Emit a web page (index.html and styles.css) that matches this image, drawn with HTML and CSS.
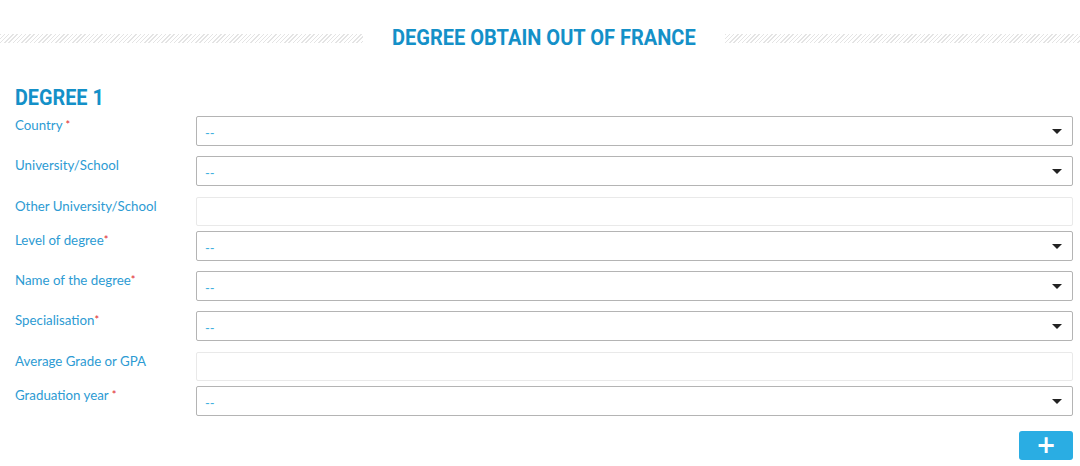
FILE: index.html
```html
<!DOCTYPE html>
<html>
	<head>
		<meta charset="UTF-8">
		<title>Degree obtain out of France</title>
		<link rel="stylesheet" href="styles.css">
	</head>
	<body>
		<div class="page">
			<div class="head">
				<span class="stripes"></span>
				<h2 class="title">DEGREE OBTAIN OUT OF FRANCE</h2>
				<span class="stripes stripes-r"></span>
			</div>

			<h3 class="sub">DEGREE 1</h3>

			<div class="form">
				<div class="row">
					<label class="lbl">Country <i class="req">*</i></label>
					<div class="select"><span>--</span><b class="arrow"></b></div>
				</div>
				<div class="row">
					<label class="lbl">University/School</label>
					<div class="select"><span>--</span><b class="arrow"></b></div>
				</div>
				<div class="row row-input">
					<label class="lbl">Other University/School</label>
					<div class="input"></div>
				</div>
				<div class="row">
					<label class="lbl">Level of degree<i class="req">*</i></label>
					<div class="select"><span>--</span><b class="arrow"></b></div>
				</div>
				<div class="row">
					<label class="lbl">Name of the degree<i class="req">*</i></label>
					<div class="select"><span>--</span><b class="arrow"></b></div>
				</div>
				<div class="row">
					<label class="lbl">Specialisation<i class="req">*</i></label>
					<div class="select"><span>--</span><b class="arrow"></b></div>
				</div>
				<div class="row row-input">
					<label class="lbl">Average Grade or GPA</label>
					<div class="input"></div>
				</div>
				<div class="row">
					<label class="lbl">Graduation year <i class="req">*</i></label>
					<div class="select"><span>--</span><b class="arrow"></b></div>
				</div>
			</div>

			<div class="actions">
				<button class="add">+</button>
			</div>
		</div>
	</body>
</html>
```

FILE: styles.css
```css
*{
	padding: 0px;
	margin: 0px;
	box-sizing: border-box;
}
body {
	background: #fff;
	font-family: "Lato", "Liberation Sans", sans-serif;
}
.page {
	padding: 25px 7px 0 15px;
}

/* titre avec les bandes hachurées */
.head {
	display: flex;
	align-items: center;
	gap: 14px;
	margin-left: -15px;
	margin-right: -7px;
}
.stripes {
	flex: 1;
	height: 9px;
	background: repeating-linear-gradient(135deg, #e4e4e4 0px, #e4e4e4 1px, #fff 1px, #fff 3px);
}
.stripes-r {
	flex: 0.98;
}
.title {
	font: 700 22px/26px "Roboto", sans-serif;
	color: #1490c8;
	white-space: nowrap;
	transform: scaleX(0.91);
}
.sub {
	font: 700 22px/26px "Roboto", sans-serif;
	color: #1490c8;
	margin-top: 34px;
	margin-bottom: 5px;
	display: inline-block;
	transform: scaleX(0.9);
	transform-origin: left center;
}

.row {
	display: flex;
	margin-bottom: 10px;
}
/* les marges se fusionnent : 11px au-dessus, 5px en dessous */
.row-input {
	margin-top: 11px;
	margin-bottom: 5px;
}
.lbl {
	width: 181px;
	flex: none;
	font-size: 13.3px;
	line-height: 18px;
	color: #2d9bd3;
}
.req {
	font-style: normal;
	color: #e0262b;
	font-size: 11px;
	vertical-align: top;
}
.select {
	flex: 1;
	height: 30px;
	border: 1px solid #b4b4b4;
	border-radius: 2px;
	display: flex;
	align-items: center;
	justify-content: space-between;
	padding: 0 10px 0 8px;
	font-size: 13px;
	color: #3fb0e0;
}
.select span {
	padding-top: 3px;
}
.arrow {
	width: 0;
	height: 0;
	border-left: 5px solid transparent;
	border-right: 5px solid transparent;
	border-top: 5px solid #222;
}
.input {
	flex: 1;
	height: 29px;
	border: 1px solid #e9e9e9;
	border-radius: 2px;
}

.actions {
	display: flex;
	justify-content: flex-end;
	margin-top: 15px;
}
.add {
	width: 54px;
	height: 29px;
	border: none;
	border-radius: 3px;
	background: #2aade3;
	color: #fff;
	font: 700 24px/29px "DejaVu Sans", sans-serif;
}
```
